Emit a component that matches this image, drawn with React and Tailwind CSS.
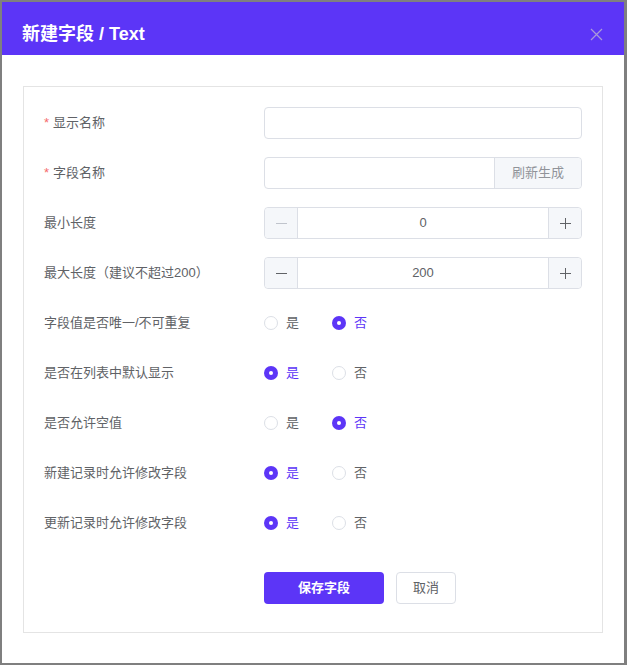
import React, { useState } from 'react';

const FONT = { fontFamily: '"Liberation Sans", "Noto Sans CJK SC", sans-serif' };

const Radio = ({ checked, label, onClick }) => (
  <label onClick={onClick} className="flex items-center cursor-pointer mr-[33px]">
    {checked ? (
      <span className="w-[14px] h-[14px] rounded-full bg-[#5c35f7] flex items-center justify-center">
        <span className="w-[4px] h-[4px] rounded-full bg-white" />
      </span>
    ) : (
      <span className="w-[14px] h-[14px] rounded-full border border-[#dcdfe6] bg-white" />
    )}
    <span className={`ml-[8px] text-[13px] ${checked ? 'text-[#5c35f7]' : 'text-[#606266]'}`}>{label}</span>
  </label>
);

const Row = ({ label, required, children }) => (
  <div className="flex items-center h-8">
    <div className="w-[220px] text-[13px] text-[#606266] flex items-center">
      {required && <span className="text-[#f56c6c] mr-[4px]">*</span>}
      {label}
    </div>
    <div className="flex-1 flex items-center">{children}</div>
  </div>
);

const NumberInput = ({ value, disabledMinus }) => (
  <div className="flex w-full h-8 border border-[#dcdfe6] rounded">
    <button className={`w-[33px] bg-[#f5f7fa] border-r border-[#dcdfe6] rounded-l flex items-center justify-center ${disabledMinus ? 'text-[#c0c4cc]' : 'text-[#606266]'}`}>
      <svg width="13" height="13" viewBox="0 0 13 13"><path d="M1 6.5h11" stroke="currentColor" strokeWidth="1" /></svg>
    </button>
    <div className="flex-1 flex items-center justify-center text-[13px] text-[#606266]">{value}</div>
    <button className="w-[33px] bg-[#f5f7fa] border-l border-[#dcdfe6] rounded-r flex items-center justify-center text-[#606266]">
      <svg width="13" height="13" viewBox="0 0 13 13"><path d="M1 6.5h11M6.5 1v11" stroke="currentColor" strokeWidth="1" /></svg>
    </button>
  </div>
);

export default function App() {
  const [opts, setOpts] = useState({ unique: false, show: true, empty: false, create: true, update: true });
  const set = (k, v) => setOpts({ ...opts, [k]: v });

  const radios = [
    { key: 'unique', label: '字段值是否唯一/不可重复' },
    { key: 'show', label: '是否在列表中默认显示' },
    { key: 'empty', label: '是否允许空值' },
    { key: 'create', label: '新建记录时允许修改字段' },
    { key: 'update', label: '更新记录时允许修改字段' },
  ];

  return (
    <div style={FONT} className="w-full h-[665px] border-t-2 border-l-2 border-r-[3px] border-b-2 border-[#7f7f7f] bg-white flex flex-col">
      <div className="h-[53px] bg-[#5c35f7] pl-5 pr-[21px] pt-[20px] flex justify-between">
        <span className="text-white text-[18px] font-bold leading-[24px]">新建字段 / Text</span>
        <svg width="13" height="13" viewBox="0 0 13 13" className="mt-[6px] text-[#a99ad8]">
          <path d="M1 1l11 11M12 1L1 12" stroke="currentColor" strokeWidth="1.2" />
        </svg>
      </div>

      <div className="flex-1 pt-[31px] px-[21px] pb-[30px]">
        <div className="h-full border border-[#e4e4e4] px-5 pt-5 flex flex-col gap-[18px]">
          <Row label="显示名称" required>
            <input className="w-full h-8 border border-[#dcdfe6] rounded px-[15px] text-[13px] outline-none" />
          </Row>
          <Row label="字段名称" required>
            <div className="flex w-full h-8 border border-[#dcdfe6] rounded">
              <input className="flex-1 min-w-0 px-[15px] text-[13px] outline-none rounded-l" />
              <button className="w-[87px] bg-[#f5f7fa] border-l border-[#dcdfe6] rounded-r text-[13px] text-[#909399]">刷新生成</button>
            </div>
          </Row>
          <Row label="最小长度">
            <NumberInput value="0" disabledMinus />
          </Row>
          <Row label="最大长度（建议不超过200）">
            <NumberInput value="200" />
          </Row>
          {radios.map((r) => (
            <Row key={r.key} label={r.label}>
              <Radio checked={opts[r.key]} label="是" onClick={() => set(r.key, true)} />
              <Radio checked={!opts[r.key]} label="否" onClick={() => set(r.key, false)} />
            </Row>
          ))}
          <div className="flex pl-[220px] mt-[15px] gap-[12px]">
            <button className="w-[120px] h-8 bg-[#5c35f7] text-white text-[13px] font-bold rounded">保存字段</button>
            <button className="w-[60px] h-8 border border-[#dcdfe6] text-[#606266] text-[13px] rounded bg-white">取消</button>
          </div>
        </div>
      </div>
    </div>
  );
}
